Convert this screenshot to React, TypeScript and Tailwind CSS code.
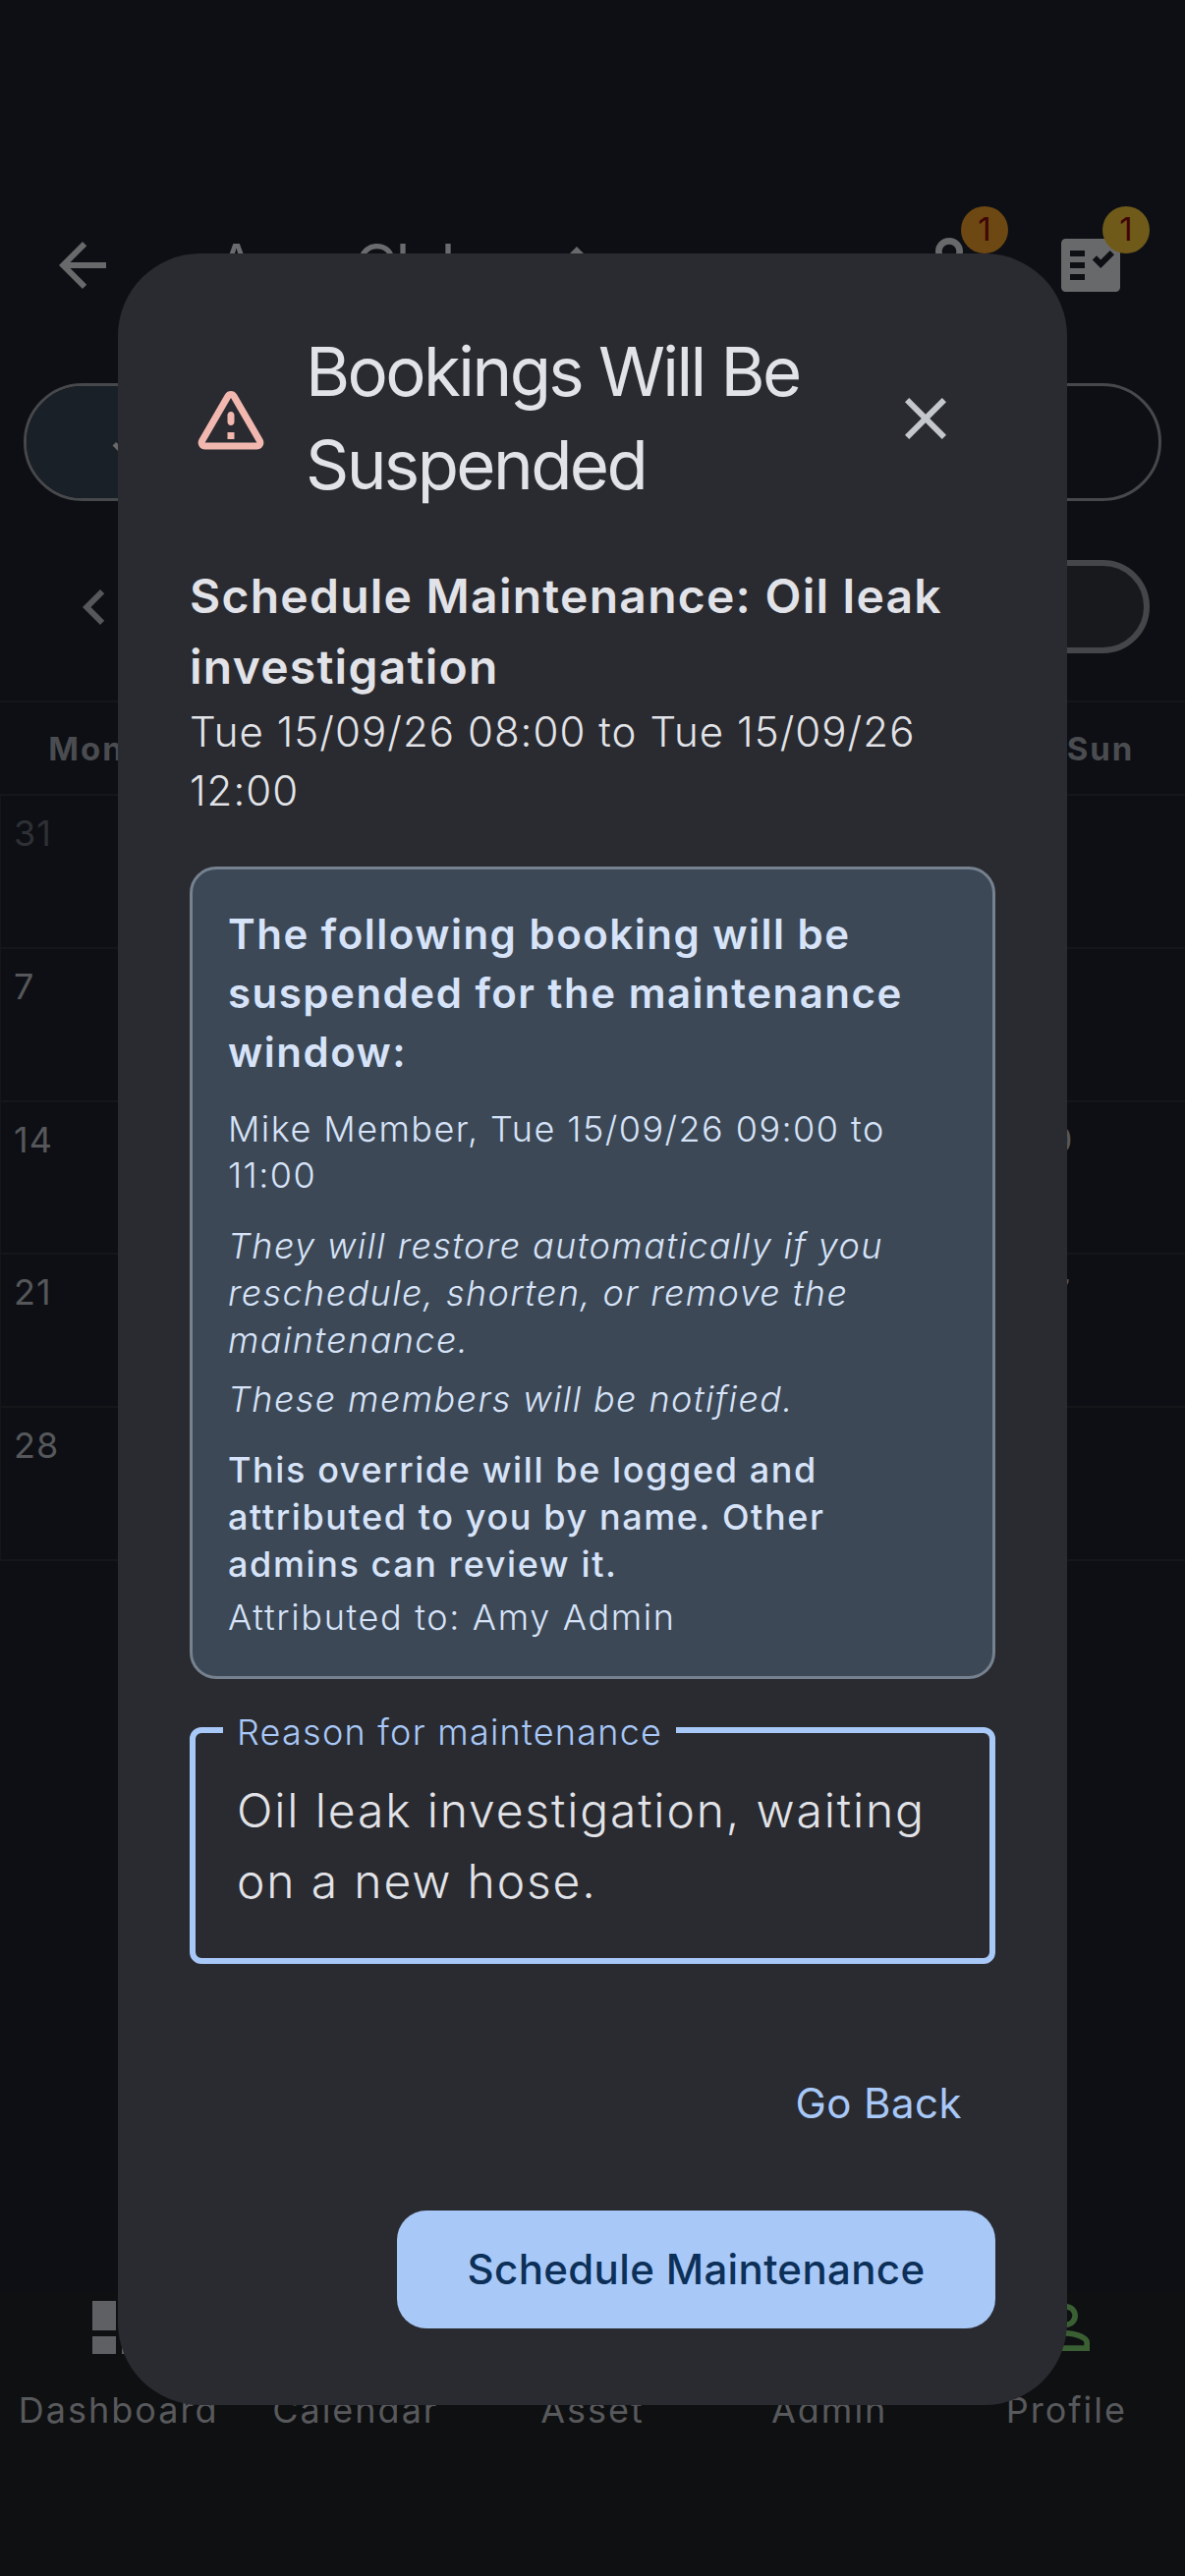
import React from "react";

function Row({ first, sun, dim }: { first: string; sun?: string; dim?: boolean }) {
  return (
    <div className="grid h-[155.8px] grid-cols-7 border-b-[2px] border-l-[1px] border-[#14161a] pl-[13px] pt-[14px] text-[36px] leading-[48px] tracking-[1px]">
      <span className={dim ? "text-[#2e3034]" : "text-[#55575a]"}>{first}</span>
      <span className="col-start-7 pl-[10px] text-[#55575a]">{sun}</span>
    </div>
  );
}

function NavItem({ label, children }: { label: string; children?: React.ReactNode }) {
  return (
    <div className="flex flex-col items-center">
      <div className="h-[72px] w-[72px]">{children}</div>
      <span className="mt-[24px] text-[36px] leading-[48px] tracking-[2px] text-[#58595c]">{label}</span>
    </div>
  );
}

export default function App() {
  return (
    <div className="relative h-[2622px] w-[1206px] overflow-hidden bg-[#0d0f14] font-['Inter',sans-serif] text-white">
      {/* Dimmed page behind the dialog */}
      <div className="flex h-[312px] items-end justify-between pb-[6px] pl-[48px] pr-[60px]">
        <div className="flex h-[72px] items-center">
          <svg width="72" height="72" viewBox="0 0 24 24" fill="#68696b">
            <path d="M20 11H7.83l5.59-5.59L12 4l-8 8 8 8 1.41-1.41L7.83 13H20v-2z" />
          </svg>
          <span className="ml-[100px] text-[60px] font-normal leading-[72px] tracking-[-2px] text-[#6a6b6e]">Aero Club</span>
          <svg className="ml-[68px] mt-[16px]" width="72" height="72" viewBox="0 0 24 24" fill="#68696b">
            <path d="M12 5.830L15.170 9l1.410-1.410L12 3 7.410 7.590 8.830 9 12 5.830z" />
          </svg>
        </div>
        <div className="flex items-center gap-[72px]">
          <div className="relative h-[72px] w-[72px]">
            <svg className="-m-[6px]" width="84" height="84" viewBox="0 0 24 24" fill="#68696b">
              <path d="M12 5.900a2.100 2.100 0 1 1 0 4.200 2.100 2.100 0 0 1 0-4.200M12 4a4 4 0 1 0 0 8 4 4 0 0 0 0-8zm0 9c-2.670 0-8 1.340-8 4v3h16v-3c0-2.660-5.330-4-8-4z" />
            </svg>
            <span className="absolute left-[48px] top-[-24px] flex h-[48px] w-[48px] items-center justify-center rounded-full bg-[#6e4813] text-[33px] text-[#3f0505]">1</span>
          </div>
          <div className="relative h-[72px] w-[72px]">
            <svg width="72" height="72" viewBox="0 0 24 24" fill="#68696b">
              <path fillRule="evenodd" d="M3.500 3h17c.83 0 1.500.67 1.500 1.500v15c0 .83-.67 1.500-1.500 1.500h-17C2.670 21 2 20.330 2 19.500v-15C2 3.670 2.670 3 3.500 3zM5 7v2h5V7H5zm0 4v2h5v-2H5zm0 4v2h5v-2H5zm15-6.580L18.580 7l-3.170 3.170L14 8.760l-1.410 1.410 2.820 2.830L20 8.420z" />
            </svg>
            <span className="absolute left-[48px] top-[-24px] flex h-[48px] w-[48px] items-center justify-center rounded-full bg-[#6f5a1a] text-[33px] text-[#3f0505]">1</span>
          </div>
        </div>
      </div>

      <div className="mx-[24px] mt-[78px] flex h-[120px] overflow-hidden rounded-full border-[3px] border-[#46484b]">
        <div className="flex w-1/2 items-center bg-[#1a2027] pl-[79px]">
          <svg width="60" height="60" viewBox="0 0 24 24" fill="#68696b">
            <path d="M9 16.170L4.830 12l-1.420 1.410L9 19 21 7l-1.410-1.410z" />
          </svg>
        </div>
      </div>

      <div className="ml-[60px] mr-[36px] mt-[60px] flex h-[95px] items-center justify-between">
        <svg width="72" height="72" viewBox="0 0 24 24" fill="#55575a">
          <path d="M15.410 7.410L14 6l-6 6 6 6 1.410-1.410L10.830 12z" />
        </svg>
        <div className="h-[95px] w-[400px] rounded-full border-[6px] border-[#444649] bg-[#17191d]" />
      </div>

      <div className="mt-[48px] border-y-[2px] border-[#14161a]">
        <div className="grid h-[93px] grid-cols-7 items-center pl-[2px] pt-[2px] text-center text-[33px] font-bold tracking-[2px] text-[#4a4c50]">
          {["Mon", "Tue", "Wed", "Thu", "Fri", "Sat", "Sun"].map((d) => (
            <span key={d}>{d}</span>
          ))}
        </div>
      </div>
      <Row first="31" dim />
      <Row first="7" />
      <Row first="14" sun="20" />
      <Row first="21" sun="27" />
      <Row first="28" />

      <div className="mt-[744px] grid grid-cols-5 bg-[#0f1012] pb-[200px]">
        <NavItem label="Dashboard">
          <svg width="72" height="72" viewBox="0 0 24 24" fill="#5f6063">
            <path d="M3 13h8V3H3v10zm0 8h8v-6H3v6zm10 0h8V11h-8v10zm0-18v6h8V3h-8z" />
          </svg>
        </NavItem>
        <NavItem label="Calendar" />
        <NavItem label="Asset" />
        <NavItem label="Admin" />
        <NavItem label="Profile">
          <svg width="72" height="72" viewBox="0 0 24 24" fill="#3a5f33">
            <path d="M12 5.900a2.100 2.100 0 1 1 0 4.200 2.100 2.100 0 0 1 0-4.200m0 9c2.970 0 6.100 1.460 6.100 2.100v1.100H5.900V17c0-.64 3.130-2.100 6.100-2.100M12 4C9.790 4 8 5.790 8 8s1.790 4 4 4 4-1.790 4-4-1.790-4-4-4zm0 9c-2.670 0-8 1.340-8 4v3h16v-3c0-2.660-5.330-4-8-4z" />
          </svg>
        </NavItem>
      </div>

      {/* Dialog */}
      <div className="absolute left-[120px] top-[258px] flex h-[2190px] w-[966px] flex-col rounded-[84px] bg-[#2a2b30] px-[73px] pt-[73px]">
        <div className="flex items-center">
          <svg className="shrink-0" width="84" height="84" viewBox="0 0 24 24" fill="#f2b8b0">
            <path d="M12 5.990L19.530 19H4.470L12 5.990M2.740 18c-.77 1.330.19 3 1.730 3h15.060c1.540 0 2.500-1.670 1.730-3L13.730 4.990c-.77-1.330-2.690-1.330-3.460 0L2.740 18zM11 11v2c0 .55.45 1 1 1s1-.45 1-1v-2c0-.55-.45-1-1-1s-1 .45-1 1zm0 5h2v2h-2z" />
          </svg>
          <h2 className="ml-[34px] w-[570px] text-[69px] font-normal leading-[95px] tracking-[-2.6px] text-[#e2e3e8]">Bookings Will Be Suspended</h2>
          <svg className="ml-[25px] shrink-0" width="72" height="72" viewBox="0 0 24 24" fill="#c4c7cc">
            <path d="M19 6.410L17.590 5 12 10.590 6.410 5 5 6.410 10.590 12 5 17.590 6.410 19 12 13.410 17.590 19 19 17.590 13.410 12z" />
          </svg>
        </div>

        <p className="mt-[50px] text-[48px] font-semibold leading-[72px] tracking-[1.25px] text-[#e2e3e8]">Schedule Maintenance: Oil leak investigation</p>
        <p className="text-[42px] font-light leading-[60px] tracking-[1.05px] text-[#e2e3e8]">Tue 15/09/26 08:00 to Tue 15/09/26 12:00</p>

        <div className="mt-[47px] rounded-[27px] border-[3px] border-[#76828f] bg-[#3d4856] px-[36px] py-[36px] text-[#d6e3f8]">
          <p className="text-[42px] font-semibold leading-[60px] tracking-[1.5px]">The following booking will be suspended for the maintenance window:</p>
          <p className="mt-[25px] text-[36px] font-light leading-[47px] tracking-[1.45px]">Mike Member, Tue 15/09/26 09:00 to 11:00</p>
          <p className="mt-[24px] text-[36px] font-light italic leading-[48px] tracking-[1.4px]">They will restore automatically if you reschedule, shorten, or remove the maintenance.</p>
          <p className="mt-[12px] text-[36px] font-light italic leading-[48px] tracking-[1.4px]">These members will be notified.</p>
          <p className="mt-[24px] text-[36px] font-medium leading-[48px] tracking-[1.6px]">This override will be logged and attributed to you by name. Other admins can review it.</p>
          <p className="mt-[6px] text-[36px] font-light leading-[48px] tracking-[1.65px]">Attributed to: Amy Admin</p>
        </div>

        <div className="relative mt-[49px] rounded-[12px] border-[6px] border-[#a8c8f8] pb-[42px] pl-[42px] pr-[36px] pt-[43px] text-[48px] font-light leading-[72px] tracking-[1.85px] text-[#e2e3e8]">
          <span className="absolute left-[28px] top-[-25px] bg-[#2a2b30] px-[14px] text-[36px] font-light leading-[48px] tracking-[1.25px] text-[#a8c8f8]">Reason for maintenance</span>
          Oil leak investigation, waiting on a new hose.
        </div>

        <div className="mt-[112px] flex justify-end pr-[34px]">
          <span className="text-[42px] leading-[60px] tracking-[0.45px] text-[#a8c8f8]">Go Back</span>
        </div>

        <div className="mt-[79px] flex justify-end">
          <span className="flex h-[120px] w-[609px] items-center justify-center rounded-[30px] bg-[#a8c8f8] text-[42px] font-medium leading-[60px] tracking-[0.35px] text-[#0c3058]">Schedule Maintenance</span>
        </div>
      </div>
    </div>
  );
}
